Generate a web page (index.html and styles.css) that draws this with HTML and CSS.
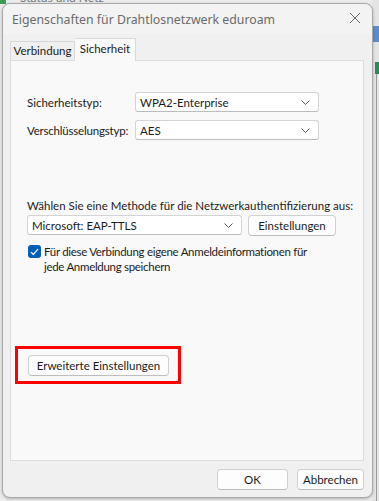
FILE: index.html
```html
<!DOCTYPE html>
<html lang="de">
<head>
<meta charset="utf-8">
<link rel="stylesheet" href="styles.css">
</head>
<body>
<div class="desktop">
  <div class="bg-top"><span class="bg-green"></span><span class="bg-text">Status und Netz</span></div>
  <div class="bg-right"><span class="bg-blue"></span><span class="bg-green2"></span><span class="bg-line"></span></div>
  <div class="window">
    <div class="titlebar">
      <span class="title">Eigenschaften für Drahtlosnetzwerk eduroam</span>
      <svg class="close" width="12" height="12" viewBox="0 0 12 12"><path d="M1 1L11 11M11 1L1 11" stroke="#6a6a6a" stroke-width="1"/></svg>
    </div>
    <div class="tabs">
      <div class="tab">Verbindung</div>
      <div class="tab active">Sicherheit</div>
    </div>
    <div class="panel">
      <div class="row first">
        <span class="label">Sicherheitstyp:</span>
        <div class="select wide"><span>WPA2-Enterprise</span><svg class="chev" width="9" height="5" viewBox="0 0 9 5"><path d="M0.5 0.5L4.5 4.5L8.5 0.5" fill="none" stroke="#555" stroke-width="1"/></svg></div>
      </div>
      <div class="row">
        <span class="label tight">Verschlüsselungstyp:</span>
        <div class="select wide"><span>AES</span><svg class="chev" width="9" height="5" viewBox="0 0 9 5"><path d="M0.5 0.5L4.5 4.5L8.5 0.5" fill="none" stroke="#555" stroke-width="1"/></svg></div>
      </div>
      <div class="method-label">Wählen Sie eine Methode für die Netzwerkauthentifizierung aus:</div>
      <div class="method-row">
        <div class="select method"><span>Microsoft: EAP-TTLS</span><svg class="chev" width="9" height="5" viewBox="0 0 9 5"><path d="M0.5 0.5L4.5 4.5L8.5 0.5" fill="none" stroke="#555" stroke-width="1"/></svg></div>
        <div class="btn settings">Einstellungen</div>
      </div>
      <div class="check-row">
        <span class="checkbox"><svg width="9" height="8" viewBox="0 0 9 8"><path d="M1 4.2L3.4 6.5L8 1.2" fill="none" stroke="#fff" stroke-width="1.2"/></svg></span>
        <span class="check-text">Für diese Verbindung eigene Anmeldeinformationen für<br>jede Anmeldung speichern</span>
      </div>
      <div class="highlight">
        <div class="btn advanced">Erweiterte Einstellungen</div>
      </div>
    </div>
    <div class="footer">
      <div class="btn ok">OK</div>
      <div class="btn cancel">Abbrechen</div>
    </div>
  </div>
</div>
</body>
</html>
```
FILE: styles.css
```css
* { box-sizing: border-box; }
html, body { margin: 0; padding: 0; }
body {
  width: 379px;
  height: 501px;
  overflow: hidden;
  background: #ececec;
  font-family: Lato, "Noto Sans", sans-serif;
  font-size: 11.5px;
  color: #1b1b1b;
}
.desktop { position: relative; width: 379px; height: 501px; }
.bg-top { position: absolute; left: 0; top: 0; width: 379px; height: 4px; overflow: hidden; }
.bg-green { position: absolute; left: 0; top: -4px; width: 6px; height: 8px; background: #3f9a55; }
.bg-text { position: absolute; left: 20px; top: -10px; font-size: 12px; color: #777; }
.bg-right { position: absolute; left: 372px; top: 0; width: 7px; height: 501px; background: #e4e4e4; }
.bg-blue { position: absolute; left: 0; top: 26px; width: 7px; height: 16px; background: #5b8ec9; }
.bg-green2 { position: absolute; left: 3px; top: 62px; width: 4px; height: 12px; background: #2e8b57; }
.bg-line { position: absolute; left: 4px; top: 74px; width: 1px; height: 427px; background: #9a9a9a; }
.window {
  position: absolute;
  left: 2px;
  top: 3px;
  width: 371px;
  height: 495px;
  background: #f0f0f0;
  border: 1px solid #a8a8a8;
  border-radius: 8px;
  box-shadow: 0 1px 3px rgba(0,0,0,0.25);
  display: flex;
  flex-direction: column;
}
.titlebar {
  height: 30px;
  flex: none;
  display: flex;
  align-items: center;
  justify-content: space-between;
  padding: 0 9px 0 9px;
  background: #f3f3f3;
  border-radius: 8px 8px 0 0;
}
.title { color: #6a6a6a; font-family: "Noto Sans", sans-serif; font-size: 12.3px; white-space: nowrap; }
.close { margin-right: 2px; margin-top: -2px; }
.tabs {
  display: flex;
  flex: none;
  align-items: flex-end;
  padding-left: 7px;
  height: 26px;
}
.tab {
  height: 19px;
  width: 65px;
  border: 1px solid #d9d9d9;
  border-bottom: none;
  background: #f0f0f0;
  line-height: 18px;
  text-align: center;
  white-space: nowrap;
  color: #1b1b1b;
}
.tab.active {
  height: 23px;
  width: 61px;
  line-height: 20px;
  background: #f9f9f9;
  border-left: none;
  position: relative;
  top: 1px;
}
.panel {
  flex: none;
  margin: 0 8px 0 7px;
  height: 401px;
  background: #f9f9f9;
  border: 1px solid #dcdcdc;
  padding: 0 0 0 16px;
  display: flex;
  flex-direction: column;
}
.row { display: flex; align-items: center; height: 20px; margin-top: 8px; }
.row.first { margin-top: 31px; }
.label { width: 108px; white-space: nowrap; }
.label.tight { letter-spacing: -0.2px; }
.select {
  height: 20px;
  flex: none;
  background: #ffffff;
  border: 1px solid #d4d4d4;
  border-bottom-color: #bcbcbc;
  border-radius: 3px;
  display: flex;
  align-items: center;
  justify-content: space-between;
  padding: 0 8px 0 4px;
  white-space: nowrap;
}
.select.wide { width: 184px; }
.chev { flex: none; }
.method-label { margin-top: 58px; height: 15px; line-height: 15px; white-space: nowrap; }
.method-row { display: flex; gap: 6px; margin-top: 2px; }
.select.method { width: 215px; }
.btn {
  height: 21px;
  flex: none;
  background: #fdfdfd;
  border: 1px solid #d0d0d0;
  border-bottom-color: #bdbdbd;
  border-radius: 4px;
  display: flex;
  align-items: center;
  justify-content: center;
  white-space: nowrap;
  color: #1b1b1b;
}
.btn.settings { width: 88px; }
.check-row { display: flex; margin-top: 8px; margin-left: 1px; }
.checkbox {
  width: 13px; height: 13px;
  border-radius: 3px;
  background: #005fb8;
  display: flex; align-items: center; justify-content: center;
  margin-top: 1px;
  flex: none;
}
.check-text { margin-left: 3px; line-height: 15px; white-space: nowrap; letter-spacing: -0.3px; }
.highlight {
  margin-top: 72px;
  margin-left: -12px;
  width: 166px;
  height: 38px;
  border: 3px solid #ff0000;
  padding: 6px 0 0 10px;
}
.btn.advanced { width: 141px; }
.footer {
  display: flex;
  justify-content: flex-end;
  gap: 9px;
  padding: 8px 8px 0 0;
}
.btn.ok { width: 71px; height: 21px; }
.btn.cancel { width: 67px; height: 21px; }
```
